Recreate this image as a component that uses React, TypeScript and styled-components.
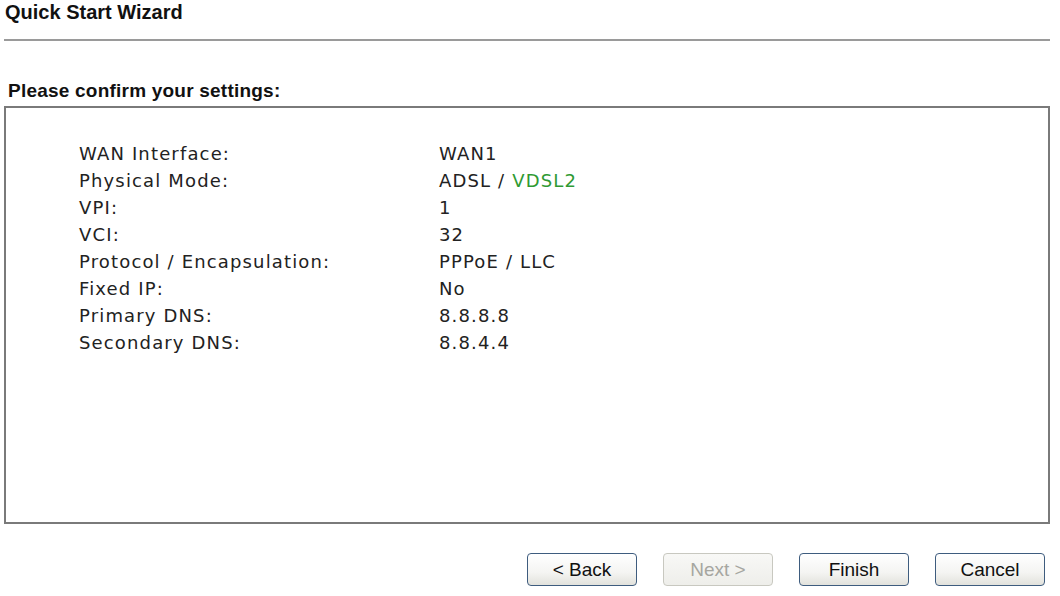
import React from "react";
import styled, { createGlobalStyle } from "styled-components";

const Global = createGlobalStyle`
  html, body { margin: 0; padding: 0; background: #fff; }
  body { width: 1060px; height: 596px; overflow: hidden; }
`;

const Page = styled.div`
  width: 1060px;
  height: 596px;
  box-sizing: border-box;
  padding: 0 10px 0 4px;
  display: flex;
  flex-direction: column;
  font-family: "Liberation Sans", Arial, sans-serif;
  color: #000;
`;

const Title = styled.h1`
  margin: 0;
  padding: 1px 0 0 1px;
  height: 28px;
  font-size: 20px;
  font-weight: bold;
  line-height: 22px;
  letter-spacing: 0px;
  color: #111;
`;

const Rule = styled.hr`
  margin: 10px 0 0;
  border: none;
  height: 2px;
  background: #9a9a9a;
`;

const Subtitle = styled.h2`
  margin: 39px 0 0;
  padding-left: 4px;
  font-size: 19px;
  font-weight: bold;
  line-height: 22px;
  height: 26px;
  letter-spacing: 0.22px;
  color: #111;
`;

const Box = styled.div`
  height: 418px;
  box-sizing: border-box;
  border: 2px solid #7a7a7a;
  padding: 32px 0 0 73px;
  display: grid;
  grid-template-columns: 360px 1fr;
  grid-auto-rows: 27px;
  align-content: start;
  font-family: "DejaVu Sans", sans-serif;
  font-size: 18px;
  letter-spacing: 1.15px;
  color: #222;
`;

const Cell = styled.div`
  line-height: 27px;
  white-space: nowrap;
`;

const Green = styled.span`
  color: #2f9a33;
`;

const Buttons = styled.div`
  display: flex;
  justify-content: flex-end;
  gap: 26px;
  margin-top: 29px;
  padding-right: 5px;
`;

const Button = styled.button<{ $disabled?: boolean }>`
  width: 110px;
  height: 33px;
  box-sizing: border-box;
  border-radius: 4px;
  border: 1.5px solid ${(p) => (p.$disabled ? "#c8c8c0" : "#3e5c7e")};
  background: ${(p) =>
    p.$disabled
      ? "linear-gradient(#f8f8f6, #eeeeea)"
      : "linear-gradient(#ffffff 0%, #f4f4f2 60%, #e2e2dc 100%)"};
  color: ${(p) => (p.$disabled ? "#a6a6a0" : "#111")};
  font-family: "Liberation Sans", Arial, sans-serif;
  font-size: 19px;
  padding: 0;
`;

const rows: [string, React.ReactNode][] = [
  ["WAN Interface:", "WAN1"],
  ["Physical Mode:", <>ADSL / <Green>VDSL2</Green></>],
  ["VPI:", "1"],
  ["VCI:", "32"],
  ["Protocol / Encapsulation:", "PPPoE / LLC"],
  ["Fixed IP:", "No"],
  ["Primary DNS:", "8.8.8.8"],
  ["Secondary DNS:", "8.8.4.4"],
];

export default function App() {
  return (
    <>
      <Global />
      <Page>
        <Title>Quick Start Wizard</Title>
        <Rule />
        <Subtitle>Please confirm your settings:</Subtitle>
        <Box>
          {rows.map(([k, v]) => (
            <React.Fragment key={k}>
              <Cell>{k}</Cell>
              <Cell>{v}</Cell>
            </React.Fragment>
          ))}
        </Box>
        <Buttons>
          <Button>&lt; Back</Button>
          <Button $disabled disabled>Next &gt;</Button>
          <Button>Finish</Button>
          <Button>Cancel</Button>
        </Buttons>
      </Page>
    </>
  );
}
